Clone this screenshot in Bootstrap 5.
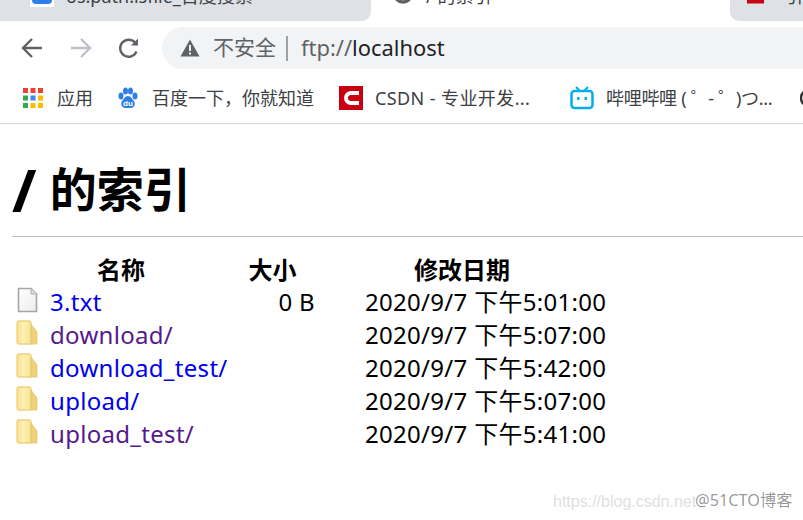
<!DOCTYPE html>
<html lang="zh-CN">
<head>
    <meta charset="UTF-8">
    <title>/ 的索引</title>
    <link href="https://cdn.jsdelivr.net/npm/bootstrap@5.3.0/dist/css/bootstrap.min.css" rel="stylesheet">
    <style>
        html, body { height: 100%; overflow: hidden; }
        body { width: 803px; height: 520px; position: relative; background: #fff; color: #000; font-family: "Noto Sans", "Noto Sans CJK SC", sans-serif; }
        .tab-strip { height: 21px; overflow: hidden; background: #fff; }
        .tab-item { height: 21px; overflow: hidden; position: relative; font-size: 18px; color: #3c4043; white-space: nowrap; line-height: 24px; }
        .tab-off-left { width: 371px; background: #dee1e6; border-bottom-right-radius: 9px; padding-left: 30px; }
        .tab-active { width: 359px; background: #fff; padding-left: 21px; }
        .tab-off-right { width: 73px; background: #dee1e6; border-bottom-left-radius: 9px; padding-left: 17px; }
        .tab-row { margin-top: -17px; gap: 12px; }
        .tab-row span { margin-top: 1px; }
        .tab-off-right .tab-row { gap: 21px; }
        .tab-x { position: absolute; top: -18px; font-size: 18px; color: #5f6368; }
        .tool-row { height: 55px; padding: 6px 0 7px 20px; }
        .tool-btn { width: 24px; height: 24px; margin-right: 24.5px; flex: none; }
        .omni-box { width: 660px; height: 42px; margin-left: -3.5px; border-radius: 21px 0 0 21px; background: #f1f3f4; padding-left: 18px; font-size: 21px; color: #5f6368; white-space: nowrap; }
        .omni-url { font-size: 21.9px; }
        .omni-sep { width: 2px; height: 25px; background: #9aa0a6; margin: 0 13px 0 10px; }
        .omni-host { color: #202124; }
        .mark-row { height: 48px; padding: 0 0 3px 22px; border-bottom: 1px solid #d9d9d9; font-size: 18px; color: #3c4043; white-space: nowrap; overflow: hidden; }
        .mark-item { flex: none; }
        .mark-item svg { flex: none; }
        .mark-wide { letter-spacing: .4px; }
        .mark-tight { letter-spacing: -.3px; }
        .page-body { padding: 0 0 0 12px; }
        .page-title { font-size: 47px; font-weight: 700; line-height: 60px; margin: 35px 0 0; word-spacing: 1px; }
        .title-slash { font-size: 59px; line-height: 0; vertical-align: -5px; }
        .page-rule { margin: 17px 0 0; border: 0; border-top: 1px solid #bbb; opacity: 1; }
        .file-table { margin-top: 16px; font-size: 24px; line-height: 33px; border-collapse: collapse; }
        .file-table th { font-weight: 700; text-align: center; padding: 0; }
        .file-table td { padding: 0 0 2px; line-height: 31px; vertical-align: top; white-space: nowrap; letter-spacing: .3px; }
        .col-name { width: 218px; }
        .col-size { width: 85px; text-align: right; }
        .file-table td.col-date { padding-left: 50px; }
        th.col-date { width: 294px; }
        .file-link { color: #0000ee; text-decoration: none; gap: 12px; padding-left: 4px; height: 31px; }
        .file-link.seen { color: #551a8b; }
        .file-link svg { flex: none; margin-top: -4px; }
        .wm-one { position: absolute; left: 553px; top: 490px; font-family: "Liberation Sans", sans-serif; font-size: 16px; color: #e0e0e0; white-space: nowrap; }
        .wm-two { position: absolute; left: 695px; top: 490px; font-size: 16.300px; line-height: 21px; color: rgba(0,0,0,.42); white-space: nowrap; }
    </style>
</head>
<body>
    <svg width="0" height="0" class="position-absolute">
        <defs>
            <linearGradient id="foldGrad" x1="0" y1="0" x2="1" y2="0">
                <stop offset="0" stop-color="#f6e08c"/>
                <stop offset=".45" stop-color="#fcf0b4"/>
                <stop offset="1" stop-color="#f7e496"/>
            </linearGradient>
            <linearGradient id="pageGrad" x1="0" y1="0" x2="1" y2="1">
                <stop offset="0" stop-color="#ffffff"/>
                <stop offset="1" stop-color="#ececec"/>
            </linearGradient>
            <symbol id="folderIcon" viewBox="0 0 22 26">
                <path d="M1 3Q1 1 3 1H13Q15 1 15 3V24H3Q1 24 1 22Z" fill="url(#foldGrad)" stroke="#eed27c" stroke-width="1.300"/>
                <path d="M15 4L21 12V24H15Z" fill="#eed27a" stroke="#e8c765" stroke-width=".8"/>
            </symbol>
            <symbol id="fileIcon" viewBox="0 0 22 26">
                <path d="M2.500 1.500H15L20.500 7V24.500H2.500Z" fill="url(#pageGrad)" stroke="#a6a6a6" stroke-width="1.600"/>
                <path d="M15 1.500V7H20.500" fill="#dcdcdc" stroke="#b0b0b0"/>
            </symbol>
        </defs>
    </svg>

    <div class="tab-strip d-flex">
        <div class="tab-item tab-off-left">
            <div class="d-flex tab-row align-items-start">
                <svg width="24" height="24" viewBox="0 0 24 24"><rect width="24" height="24" fill="#fff"/><rect x="2" y="2" width="20" height="19" rx="4" fill="#2f7fe8"/><text x="12" y="17" font-size="11" font-family="Liberation Sans" font-weight="700" fill="#fff" text-anchor="middle">du</text></svg>
                <span>os.path.isfile_百度搜索</span>
            </div>
            <span class="tab-x" style="left:342px">×</span>
        </div>
        <div class="tab-item tab-active">
            <div class="d-flex tab-row align-items-start">
                <svg width="22" height="22" viewBox="0 0 22 22"><circle cx="11" cy="11" r="8" fill="none" stroke="#5f6368" stroke-width="3.500"/></svg>
                <span>/ 的索引</span>
            </div>
            <span class="tab-x" style="left:331px">×</span>
        </div>
        <div class="tab-item tab-off-right">
            <div class="d-flex tab-row align-items-start">
                <svg width="24" height="24" viewBox="0 0 24 24"><rect width="24" height="24" fill="#c9000f"/><path d="M20 7H12a5 5 0 0 0 0 10h8" fill="none" stroke="#fff" stroke-width="4"/></svg>
                <span>引</span>
            </div>
        </div>
    </div>

    <div class="tool-row d-flex align-items-center">
        <svg class="tool-btn" viewBox="0 0 24 24" fill="none" stroke="#5f6368" stroke-width="2.400"><path d="M22 12H3M12 3l-9 9 9 9"/></svg>
        <svg class="tool-btn" viewBox="0 0 24 24" fill="none" stroke="#bdc1c6" stroke-width="2.400"><path d="M2 12h19M12 3l9 9-9 9"/></svg>
        <svg class="tool-btn" viewBox="0 0 24 24" fill="none" stroke="#5f6368" stroke-width="2.400"><path d="M19.500 15.500A8.500 8.500 0 1 1 18 6.500"/><path d="M21 2.500V9.500H14" fill="#5f6368" stroke="none"/></svg>
        <div class="omni-box d-flex align-items-center">
            <svg width="20" height="18" viewBox="0 0 20 18" style="margin-right:13px"><path d="M10 0.500L19.500 17.500H0.500Z" fill="#5f6368"/><rect x="9" y="6" width="2" height="6" fill="#f1f3f4"/><rect x="9" y="13.500" width="2" height="2" fill="#f1f3f4"/></svg>
            <span>不安全</span><span class="omni-sep"></span><span class="omni-url">ftp://<span class="omni-host">localhost</span></span>
        </div>
    </div>

    <div class="mark-row d-flex align-items-center">
        <div class="mark-item d-flex align-items-center" style="gap:13px;width:96px">
            <svg width="22" height="22" viewBox="0 0 22 22"><g fill="#ea4335"><rect x="1" y="1" width="5" height="5"/><rect x="8.500" y="1" width="5" height="5"/><rect x="16" y="1" width="5" height="5"/></g><rect x="1" y="8.500" width="5" height="5" fill="#34a853"/><rect x="8.500" y="8.500" width="5" height="5" fill="#4285f4"/><rect x="16" y="8.500" width="5" height="5" fill="#fbbc05"/><rect x="1" y="16" width="5" height="5" fill="#34a853"/><rect x="8.500" y="16" width="5" height="5" fill="#fbbc05"/><rect x="16" y="16" width="5" height="5" fill="#fbbc05"/></svg>
            <span>应用</span>
        </div>
        <div class="mark-item d-flex align-items-center" style="gap:14px;width:221px">
            <svg width="20" height="22" viewBox="0 0 20 22" fill="#2f7fe8"><ellipse cx="3" cy="9" rx="2.500" ry="3.500"/><ellipse cx="7.500" cy="4" rx="2.500" ry="3.500"/><ellipse cx="12.500" cy="4" rx="2.500" ry="3.500"/><ellipse cx="17" cy="9" rx="2.500" ry="3.500"/><path d="M10 9c3 0 4 3 6 5 2 3 0 7-3 7H7c-3 0-5-4-3-7 2-2 3-5 6-5z"/><text x="10" y="19" font-size="8" font-family="Liberation Sans" font-weight="700" fill="#fff" text-anchor="middle">du</text></svg>
            <span>百度一下，你就知道</span>
        </div>
        <div class="mark-item d-flex align-items-center" style="gap:12px;width:231px">
            <svg width="24" height="24" viewBox="0 0 24 24"><rect width="24" height="24" fill="#c9000f"/><path d="M20 7H12a5 5 0 0 0 0 10h8" fill="none" stroke="#fff" stroke-width="4"/></svg>
            <span class="mark-wide">CSDN - 专业开发...</span>
        </div>
        <div class="mark-item d-flex align-items-center" style="gap:12px;width:230px">
            <svg width="24" height="24" viewBox="0 0 24 24"><path d="M6 1l4 4M18 1l-4 4" stroke="#00aeec" stroke-width="2"/><rect x="1.500" y="5" width="21" height="17" rx="3" fill="none" stroke="#00aeec" stroke-width="2.500"/><rect x="7" y="11" width="2.500" height="3" fill="#00aeec"/><rect x="14.500" y="11" width="2.500" height="3" fill="#00aeec"/></svg>
            <span class="mark-tight">哔哩哔哩 ( ゜- ゜)つ...</span>
        </div>
        <svg class="flex-shrink-0" width="18" height="22" viewBox="0 0 18 22"><circle cx="9" cy="11" r="8" fill="none" stroke="#333" stroke-width="2.500"/></svg>
    </div>

    <main class="page-body">
        <h1 class="page-title"><span class="title-slash">/</span> 的索引</h1>
        <hr class="page-rule">
        <table class="file-table">
            <thead>
                <tr><th class="col-name">名称</th><th class="col-size">大小</th><th class="col-date">修改日期</th></tr>
            </thead>
            <tbody>
                <tr><td><a class="file-link d-flex align-items-center" href="#"><svg width="22" height="26"><use href="#fileIcon"/></svg>3.txt</a></td><td class="col-size">0 B</td><td class="col-date">2020/9/7 下午5:01:00</td></tr>
                <tr><td><a class="file-link seen d-flex align-items-center" href="#"><svg width="22" height="26"><use href="#folderIcon"/></svg>download/</a></td><td class="col-size"></td><td class="col-date">2020/9/7 下午5:07:00</td></tr>
                <tr><td><a class="file-link d-flex align-items-center" href="#"><svg width="22" height="26"><use href="#folderIcon"/></svg>download_test/</a></td><td class="col-size"></td><td class="col-date">2020/9/7 下午5:42:00</td></tr>
                <tr><td><a class="file-link d-flex align-items-center" href="#"><svg width="22" height="26"><use href="#folderIcon"/></svg>upload/</a></td><td class="col-size"></td><td class="col-date">2020/9/7 下午5:07:00</td></tr>
                <tr><td><a class="file-link seen d-flex align-items-center" href="#"><svg width="22" height="26"><use href="#folderIcon"/></svg>upload_test/</a></td><td class="col-size"></td><td class="col-date">2020/9/7 下午5:41:00</td></tr>
            </tbody>
        </table>
    </main>

    <div class="wm-one">https://blog.csdn.net</div>
    <div class="wm-two">@51CTO博客</div>

    <script src="https://cdn.jsdelivr.net/npm/bootstrap@5.3.0/dist/js/bootstrap.bundle.min.js"></script>
</body>
</html>
